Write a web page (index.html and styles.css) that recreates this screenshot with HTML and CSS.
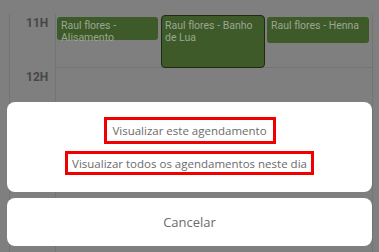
FILE: index.html
```html
<!DOCTYPE html>
<html lang="pt">
<head>
    <meta charset="UTF-8">
    <meta name="viewport" content="width=device-width, initial-scale=1.0">
    <title>Agenda</title>
    <link rel="stylesheet" href="styles.css">
</head>
<body>
    <div class="cal">
        <div class="gutter"></div>
        <div class="times">
            <div class="hour">11H</div>
            <div class="hour">12H</div>
        </div>
        <div class="days">
            <div class="row">
                <div class="ev ev1">Raul flores - Alisamento</div>
                <div class="ev ev2">Raul flores - Banho de Lua</div>
                <div class="ev ev3">Raul flores - Henna</div>
            </div>
            <div class="row"></div>
        </div>
        <div class="edge"></div>
    </div>

    <div class="sheet">
        <div class="sheet_box">
            <button type="button" class="act act1">Visualizar este agendamento</button>
            <button type="button" class="act act2">Visualizar todos os agendamentos neste dia</button>
        </div>
        <div class="sheet_box cancel_box">
            <button type="button" class="cancel">Cancelar</button>
        </div>
    </div>
</body>
</html>
```

FILE: styles.css
```css
html, body { margin:0; padding:0; }
body { width:379px; height:252px; overflow:hidden; background:#7f7f7f; font-family:Roboto, "Liberation Sans", sans-serif; position:relative; }

.cal { display:flex; height:252px; padding-top:14px; box-sizing:border-box; }
.gutter { width:9px; border-right:1px solid #747474; }
.times { width:45px; border-right:1px solid #747474; }
.hour { height:54px; box-sizing:border-box; padding:2px 0 0 16px; font-size:12px; font-weight:bold; color:#474747; line-height:14px; }
.days { flex:1; border-right:1px solid #747474; }
.edge { width:6px; }
.row { height:53px; border-bottom:1px solid #747474; display:flex; align-items:flex-start; padding-left:1px; }

.ev { background:#3f5a29; color:#9ca595; font-size:10.5px; line-height:12px; padding:3px 4px; box-sizing:border-box; border-radius:3px; }
.ev1 { width:101px; height:23px; margin-top:3px; margin-right:3px; }
.ev2 { width:104px; height:53px; margin-top:1px; margin-right:2px; border:1px solid #1e2a14; border-radius:4px; padding:4px 3px; }
.ev3 { width:102px; height:26px; margin-top:3px; }

.sheet { position:absolute; left:7px; right:7px; top:102px; display:flex; flex-direction:column; gap:6px; }
.sheet_box { background:#fff; border-radius:8px; height:90px; display:flex; flex-direction:column; align-items:center; padding-top:15px; box-sizing:border-box; gap:7px; }
.act { font-family:"Open Sans", sans-serif; font-size:11.5px; color:#6b6b6b; background:none; border:3px solid #f20000; padding:0; white-space:nowrap; cursor:pointer; }
.act1 { width:172px; height:27px; }
.act2 { width:249px; height:24px; }
.cancel_box { height:48px; padding:0; justify-content:center; }
.cancel { font-family:"Open Sans", sans-serif; font-size:13px; color:#6b6b6b; background:none; border:0; padding:0; }
```
